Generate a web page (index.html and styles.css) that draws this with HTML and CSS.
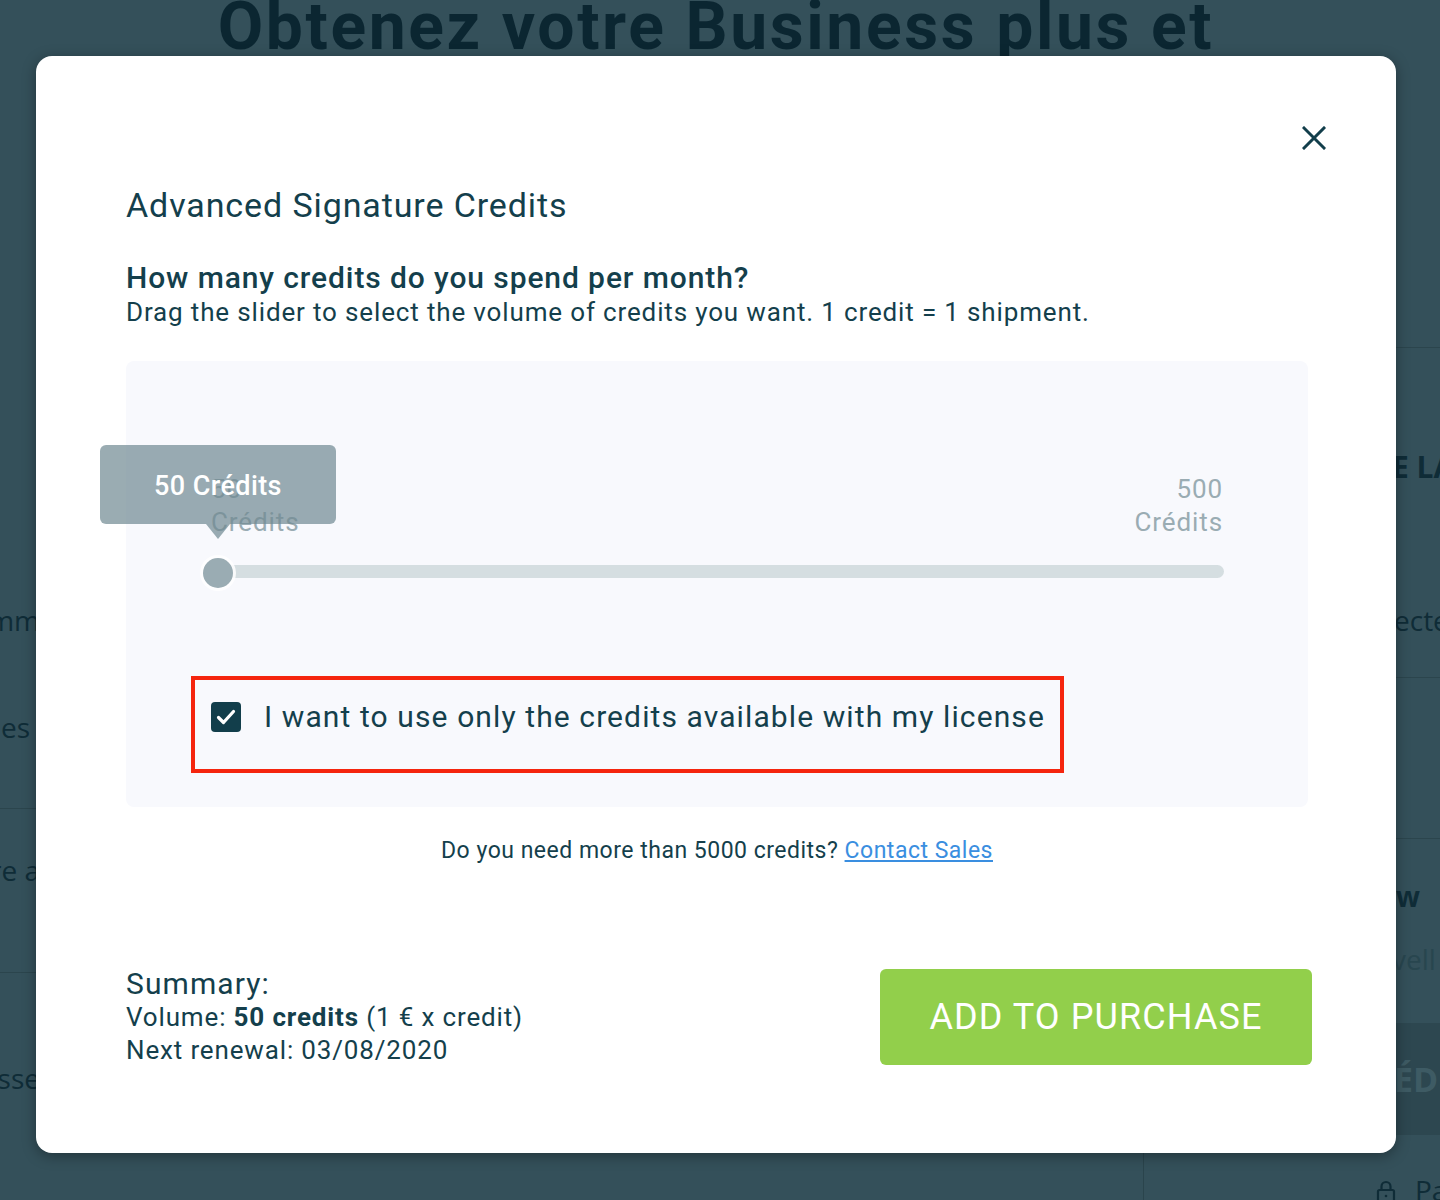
FILE: index.html
```html
<!DOCTYPE html>
<html lang="en">
<head>
<meta charset="utf-8">
<title>Advanced Signature Credits</title>
<link rel="stylesheet" href="styles.css">
</head>
<body>
<div class="page">
  <h1 class="page-title">Obtenez votre Business plus et</h1>
  <div class="page-cols">
    <div class="col-left">
      <div class="l-head"></div>
      <div class="l-row l-1"><span>Comm</span></div>
      <div class="l-row l-2"><span>Options es</span></div>
      <div class="l-row l-3"><span>Signature a</span></div>
      <div class="l-row l-4"><span>Adresse</span></div>
    </div>
    <div class="col-mid"></div>
    <div class="col-right">
      <div class="r-head"></div>
      <div class="r-a">
        <div class="r-bold">E LA</div>
        <div class="r-reg">ecteur</div>
      </div>
      <div class="r-b"></div>
      <div class="r-c">
        <div class="r-w">w</div>
        <div class="r-light">vell</div>
      </div>
      <div class="r-d">ÉDER</div>
      <div class="r-e">
        <svg class="lock" width="20" height="24" viewBox="0 0 20 24" fill="none" stroke="currentColor" stroke-width="2.2"><rect x="2" y="10" width="16" height="12" rx="1.5"/><path d="M5.5 10V6.5a4.5 4.5 0 0 1 9 0V10"/><circle cx="10" cy="16" r="1.3" fill="currentColor" stroke="none"/></svg>
        <span class="pay">Paiement</span>
      </div>
    </div>
  </div>
</div>

<div class="modal" role="dialog">
  <button class="close" aria-label="Close">
    <svg width="24" height="24" viewBox="0 0 24 24" fill="none" stroke="currentColor" stroke-width="3" stroke-linecap="square"><path d="M2 2L22 22M22 2L2 22"/></svg>
  </button>
  <h2 class="m-title">Advanced Signature Credits</h2>
  <h3 class="m-question">How many credits do you spend per month?</h3>
  <p class="m-sub">Drag the slider to select the volume of credits you want. 1 credit = 1 shipment.</p>

  <div class="panel">
    <div class="range-labels">
      <span class="rl">50<br>Crédits</span>
      <span class="rl rl-right">500<br>Crédits</span>
    </div>
    <div class="slider">
      <div class="track"></div>
      <div class="thumb">
        <div class="tip">50 Crédits</div>
      </div>
    </div>
    <label class="license">
      <span class="cb">
        <svg width="30" height="30" viewBox="0 0 30 30" fill="none" stroke="#fff" stroke-width="3.2" stroke-linecap="round" stroke-linejoin="round"><path d="M7.5 15.5L12.5 20.5L22.5 9.5"/></svg>
      </span>
      <span class="license-text">I want to use only the credits available with my license</span>
    </label>
  </div>

  <p class="more">Do you need more than 5000 credits? <a href="#">Contact Sales</a></p>

  <div class="footer">
    <div class="summary">
      <div class="sum-title">Summary:</div>
      <div class="sum-line">Volume: <b>50 credits</b> (1 € x credit)</div>
      <div class="sum-line">Next renewal: 03/08/2020</div>
    </div>
    <button class="add">ADD TO PURCHASE</button>
  </div>
</div>
</body>
</html>
```

FILE: styles.css
```css
* { box-sizing: border-box; }

html, body {
  margin: 0;
  padding: 0;
}

body {
  width: 1440px;
  height: 1200px;
  overflow: hidden;
  background: #34505a;
  font-family: Roboto, "Open Sans", "Liberation Sans", sans-serif;
  position: relative;
}

/* ---------- background page (under overlay) ---------- */
.page {
  width: 1440px;
  height: 1200px;
  display: flex;
  flex-direction: column;
}

.page-title {
  margin: -6px 0 0;
  height: 66px;
  font-size: 66px;
  line-height: 66px;
  font-weight: 700;
  letter-spacing: 2.6px;
  color: #0b2631;
  text-align: center;
  white-space: nowrap;
  padding-right: 8px;
}

.page-cols {
  flex: 1;
  display: flex;
}

.col-left {
  width: 40px;
  overflow: hidden;
  display: flex;
  flex-direction: column;
  font-family: "Open Sans", sans-serif;
  font-size: 28px;
  color: #0f2c37;
}

.l-head { height: 510px; flex: none; }

.l-row {
  display: flex;
  justify-content: flex-end;
  white-space: nowrap;
  flex: none;
}

.l-1 { height: 100px; line-height: 100px; }
.l-2 { height: 139px; line-height: 114px; border-bottom: 1px solid #2b454d; padding-right: 10px; }
.l-3 { height: 164px; line-height: 122px; border-bottom: 1px solid #2b454d; }
.l-4 { line-height: 210px; }

.col-mid { flex: 1; }

.col-right {
  width: 297px;
  border-left: 1px solid #2a444c;
  display: flex;
  flex-direction: column;
  font-family: "Open Sans", sans-serif;
  color: #0f2c37;
  white-space: nowrap;
  overflow: hidden;
}

.r-head { height: 288px; border-bottom: 1px solid #2b454d; flex: none; }

.r-a { height: 330px; border-bottom: 1px solid #2b454d; flex: none; padding-left: 248px; }
.r-bold { font-size: 30px; font-weight: 700; line-height: 238px; }
.r-reg { font-size: 28px; line-height: 68px; padding-left: 2px; }

.r-b { height: 161px; border-bottom: 1px solid #2b454d; flex: none; }

.r-c { height: 184px; padding: 26px 0 0 252px; flex: none; }
.r-w { font-size: 28px; font-weight: 700; line-height: 63px; }
.r-light { font-size: 28px; line-height: 63px; color: #28464f; margin-left: -4px; }

.r-d {
  height: 112px;
  line-height: 112px;
  background: #2d4750;
  color: #3e5b64;
  font-size: 34px;
  font-weight: 700;
  padding-left: 250px;
  flex: none;
}

.r-e {
  display: flex;
  align-items: center;
  height: 110px;
  padding-left: 232px;
  font-size: 28px;
  flex: none;
}
.r-e .lock { flex: none; margin-top: 4px; margin-right: 19px; color: #0f2c37; }
.r-e .pay { flex: none; }

/* ---------- modal ---------- */
.modal {
  position: absolute;
  left: 36px;
  top: 56px;
  width: 1360px;
  height: 1097px;
  background: #fff;
  border-radius: 16px;
  box-shadow: 0 3px 14px rgba(0, 0, 0, 0.35);
  padding: 129px 88px 0 90px;
  display: flex;
  flex-direction: column;
  color: #143f4c;
}

.close {
  position: absolute;
  top: 70px;
  right: 70px;
  width: 24px;
  height: 24px;
  padding: 0;
  border: 0;
  background: none;
  color: #123e4b;
  cursor: pointer;
}
.close svg { display: block; }

.m-title {
  margin: 0;
  font-size: 34px;
  line-height: 40px;
  font-weight: 400;
  letter-spacing: 0.9px;
}

.m-question {
  margin: 36px 0 0;
  font-size: 30px;
  line-height: 33px;
  font-weight: 500;
  letter-spacing: 0.9px;
}

.m-sub {
  margin: 1px 0 0;
  font-size: 26px;
  line-height: 34px;
  letter-spacing: 0.85px;
}

.panel {
  margin-top: 32px;
  height: 446px;
  background: #f8f9fd;
  border-radius: 8px;
  padding: 112px 85px 34px 85px;
  display: flex;
  flex-direction: column;
}

.range-labels {
  display: flex;
  justify-content: space-between;
  font-size: 26px;
  line-height: 33px;
  letter-spacing: 0.9px;
  color: #9aacb3;
}
.rl-right { text-align: right; }

.slider {
  position: relative;
  margin: 19px -1px 0 7px;
  height: 30px;
  display: flex;
  align-items: center;
}

.track {
  flex: 1;
  height: 13px;
  margin-top: -4px;
  border-radius: 7px;
  background: #d5dee1;
}

.thumb {
  position: absolute;
  left: -15px;
  top: 0;
  width: 30px;
  height: 30px;
  border-radius: 50%;
  background: #9aacb3;
  box-shadow: 0 0 0 3px rgba(255, 255, 255, 0.85);
}

.tip {
  position: absolute;
  left: 50%;
  bottom: calc(100% + 34px);
  transform: translateX(-50%);
  width: 236px;
  height: 79px;
  border-radius: 6px;
  background: rgba(111, 137, 146, 0.7);
  color: #fff;
  font-size: 27px;
  font-weight: 500;
  letter-spacing: 0.4px;
  line-height: 79px;
  text-align: center;
  padding-top: 2px;
  white-space: nowrap;
}
.tip::after {
  content: "";
  position: absolute;
  left: 50%;
  top: 100%;
  margin-left: -12px;
  border-left: 12px solid transparent;
  border-right: 12px solid transparent;
  border-top: 15px solid rgba(111, 137, 146, 0.7);
}

.license {
  margin: 88px 0 0 -20px;
  align-self: flex-start;
  border: 4px solid #f5250e;
  padding: 22px 15px 37px 16px;
  display: flex;
  align-items: center;
  cursor: pointer;
}

.cb {
  width: 30px;
  height: 30px;
  border-radius: 4px;
  background: #123e4b;
  flex: none;
}
.cb svg { display: block; }

.license-text {
  margin-left: 23px;
  font-size: 30px;
  line-height: 30px;
  letter-spacing: 1.1px;
  color: #143f4c;
  white-space: nowrap;
}

.more {
  margin: 29px 0 0;
  text-align: center;
  font-size: 23px;
  line-height: 30px;
  letter-spacing: 0.5px;
  color: #143f4c;
}
.more a { color: #3a8ee0; text-decoration: underline; }

.footer {
  margin: 101px -4px 0 0;
  display: flex;
  justify-content: space-between;
  align-items: flex-start;
}

.sum-title { font-size: 30px; line-height: 34px; letter-spacing: 1.1px; }
.sum-line { font-size: 26px; line-height: 33px; letter-spacing: 0.85px; }
.sum-line b { font-weight: 700; }

.add {
  margin-top: 2px;
  width: 432px;
  height: 96px;
  border: 0;
  border-radius: 6px;
  background: #92cf4b;
  color: #fff;
  font-family: Roboto, sans-serif;
  font-size: 36px;
  font-weight: 400;
  letter-spacing: 1.1px;
  cursor: pointer;
}
```
